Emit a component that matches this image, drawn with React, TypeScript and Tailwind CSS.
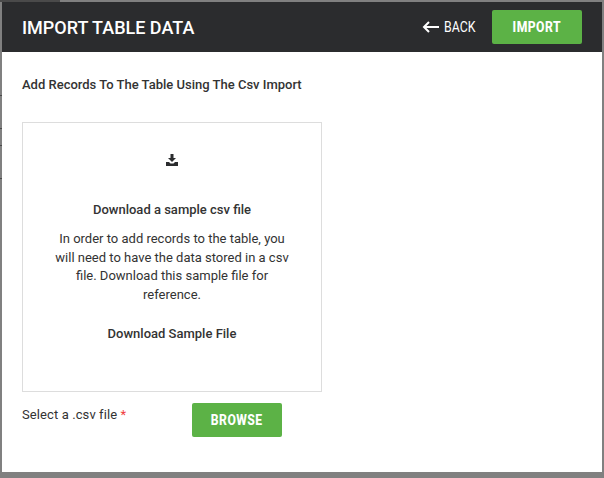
export default function App() {
  return (
    <div className="relative w-[604px] h-[478px] overflow-hidden bg-[#808080] pt-[2px] pl-[2px] font-['Roboto',sans-serif] text-[#333333]">
      {/* bits of the page behind the backdrop */}
      <div className="absolute left-0 top-0 w-[60px] h-[2px] bg-[#4a4a4a]" />
      <div className="absolute left-0 top-[95px] w-[2px] h-px bg-[#4a4a4a]" />
      <div className="absolute left-0 top-[128px] w-[2px] h-px bg-[#4a4a4a]" />
      <div className="absolute left-0 top-[145px] w-[2px] h-px bg-[#4a4a4a]" />
      <div className="absolute left-0 top-[178px] w-[2px] h-px bg-[#4a4a4a]" />

      <div className="w-[600px] h-[470px] bg-white">
        <div className="h-[50px] bg-[#2b2c2e] flex items-center pl-[20px] pr-[20px]">
          <h1 className="text-white text-[18px] font-medium">IMPORT TABLE DATA</h1>
          <div className="ml-auto flex items-center">
            <a className="flex items-center text-white text-[14px] mr-[16px]">
              <svg width="17" height="12" viewBox="0 0 17 12" fill="none" stroke="white" strokeWidth="2" className="mr-[5px]">
                <path d="M17 6H2M7 1L2 6l5 5" />
              </svg>
              <span className="scale-x-[0.88] origin-left w-[32px]">BACK</span>
            </a>
            <button className="w-[90px] h-[34px] bg-[#5cb246] rounded-[2px] text-white text-[14px] font-extrabold tracking-[0.5px]">
              <span className="inline-block scale-x-[0.87]">IMPORT</span>
            </button>
          </div>
        </div>
        <div className="pl-[20px] pt-[24px]">
          <p className="text-[13px] font-medium leading-[18px]">Add Records To The Table Using The Csv Import</p>
          <div className="w-[300px] h-[270px] mt-[28px] border border-[#dddddd] flex flex-col items-center px-[30px] pt-[31px] text-center">
            <svg width="12" height="12" viewBox="0 0 12 12" fill="#2b2c2e">
              <path d="M4.5 0h3v4H10L6 8 2 4h2.5zM0 8h3l1.5 1.5h3L9 8h3v4H0z" />
            </svg>
            <h2 className="mt-[35px] text-[13px] font-medium leading-[18px]">Download a sample csv file</h2>
            <p className="mt-[11px] text-[13px] leading-[18.57px]">
              In order to add records to the table, you will need to have the data stored in a csv file. Download this sample file for reference.
            </p>
            <a className="mt-[21px] text-[13px] font-medium leading-[18px]">Download Sample File</a>
          </div>
          <div className="flex items-start mt-[11px]">
            <label className="w-[170px] text-[13px] leading-[18px] pt-[3px] tracking-[0.1px]">
              Select a .csv file <span className="text-[#f03d3d]">*</span>
            </label>
            <button className="w-[90px] h-[34px] bg-[#5cb246] rounded-[2px] text-white text-[14px] font-extrabold tracking-[0.5px]">
              <span className="inline-block scale-x-[0.87]">BROWSE</span>
            </button>
          </div>
        </div>
      </div>
    </div>
  );
}
